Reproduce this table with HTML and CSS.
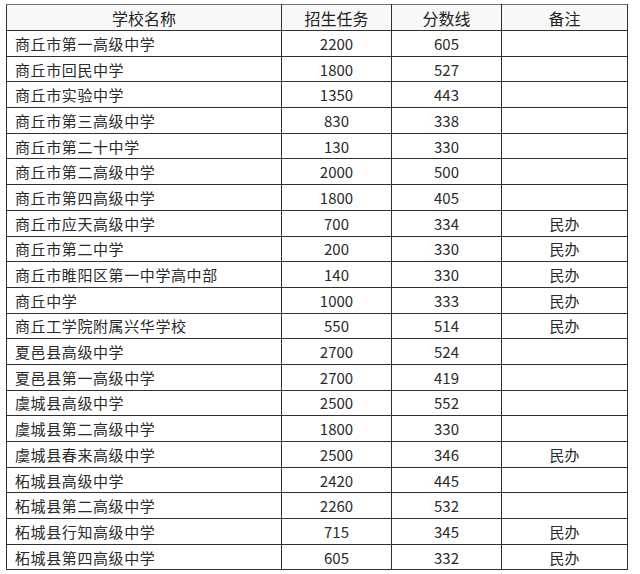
FILE: index.html
```html
<!DOCTYPE html>
<html lang="zh-CN">
<head>
<meta charset="utf-8">
<title>商丘市高中招生分数线</title>
<link rel="stylesheet" href="styles.css">
</head>
<body>
<table class="score-table">
  <colgroup>
    <col class="c-name">
    <col class="c-quota">
    <col class="c-line">
    <col class="c-note">
  </colgroup>
  <thead>
    <tr><th>学校名称</th><th>招生任务</th><th>分数线</th><th>备注</th></tr>
  </thead>
  <tbody>
    <tr><td class="name">商丘市第一高级中学</td><td>2200</td><td>605</td><td></td></tr>
    <tr><td class="name">商丘市回民中学</td><td>1800</td><td>527</td><td></td></tr>
    <tr><td class="name">商丘市实验中学</td><td>1350</td><td>443</td><td></td></tr>
    <tr><td class="name">商丘市第三高级中学</td><td>830</td><td>338</td><td></td></tr>
    <tr><td class="name">商丘市第二十中学</td><td>130</td><td>330</td><td></td></tr>
    <tr><td class="name">商丘市第二高级中学</td><td>2000</td><td>500</td><td></td></tr>
    <tr><td class="name">商丘市第四高级中学</td><td>1800</td><td>405</td><td></td></tr>
    <tr><td class="name">商丘市应天高级中学</td><td>700</td><td>334</td><td>民办</td></tr>
    <tr><td class="name">商丘市第二中学</td><td>200</td><td>330</td><td>民办</td></tr>
    <tr><td class="name">商丘市睢阳区第一中学高中部</td><td>140</td><td>330</td><td>民办</td></tr>
    <tr><td class="name">商丘中学</td><td>1000</td><td>333</td><td>民办</td></tr>
    <tr><td class="name">商丘工学院附属兴华学校</td><td>550</td><td>514</td><td>民办</td></tr>
    <tr><td class="name">夏邑县高级中学</td><td>2700</td><td>524</td><td></td></tr>
    <tr><td class="name">夏邑县第一高级中学</td><td>2700</td><td>419</td><td></td></tr>
    <tr><td class="name">虞城县高级中学</td><td>2500</td><td>552</td><td></td></tr>
    <tr><td class="name">虞城县第二高级中学</td><td>1800</td><td>330</td><td></td></tr>
    <tr><td class="name">虞城县春来高级中学</td><td>2500</td><td>346</td><td>民办</td></tr>
    <tr><td class="name">柘城县高级中学</td><td>2420</td><td>445</td><td></td></tr>
    <tr><td class="name">柘城县第二高级中学</td><td>2260</td><td>532</td><td></td></tr>
    <tr><td class="name">柘城县行知高级中学</td><td>715</td><td>345</td><td>民办</td></tr>
    <tr><td class="name">柘城县第四高级中学</td><td>605</td><td>332</td><td>民办</td></tr>
  </tbody>
</table>
</body>
</html>
```

FILE: styles.css
```css
html, body {
  margin: 0;
  padding: 0;
  background: #ffffff;
}

body {
  padding: 4px 0 0 6px;
  font-family: "Noto Sans CJK SC", "Noto Sans", sans-serif;
  color: #2a2a2a;
}

.score-table {
  border-collapse: collapse;
  table-layout: fixed;
  width: 621px;
}

.c-name { width: 275px; }
.c-quota { width: 110px; }
.c-line { width: 110px; }
.c-note { width: 126px; }

.score-table th,
.score-table td {
  border: 1px solid #303030;
  padding: 0;
  text-align: center;
  vertical-align: middle;
  white-space: nowrap;
  overflow: hidden;
  line-height: 1;
}

.score-table thead th {
  height: 25px;
  font-size: 16px;
  font-weight: normal;
  color: #222;
  background: #f8f8f8;
  border-top-color: #707070;
}

.score-table tbody td {
  height: 24.7px;
  font-size: 15px;
}

.score-table td.name {
  text-align: left;
  padding-left: 8px;
  letter-spacing: 0.6px;
}
```
